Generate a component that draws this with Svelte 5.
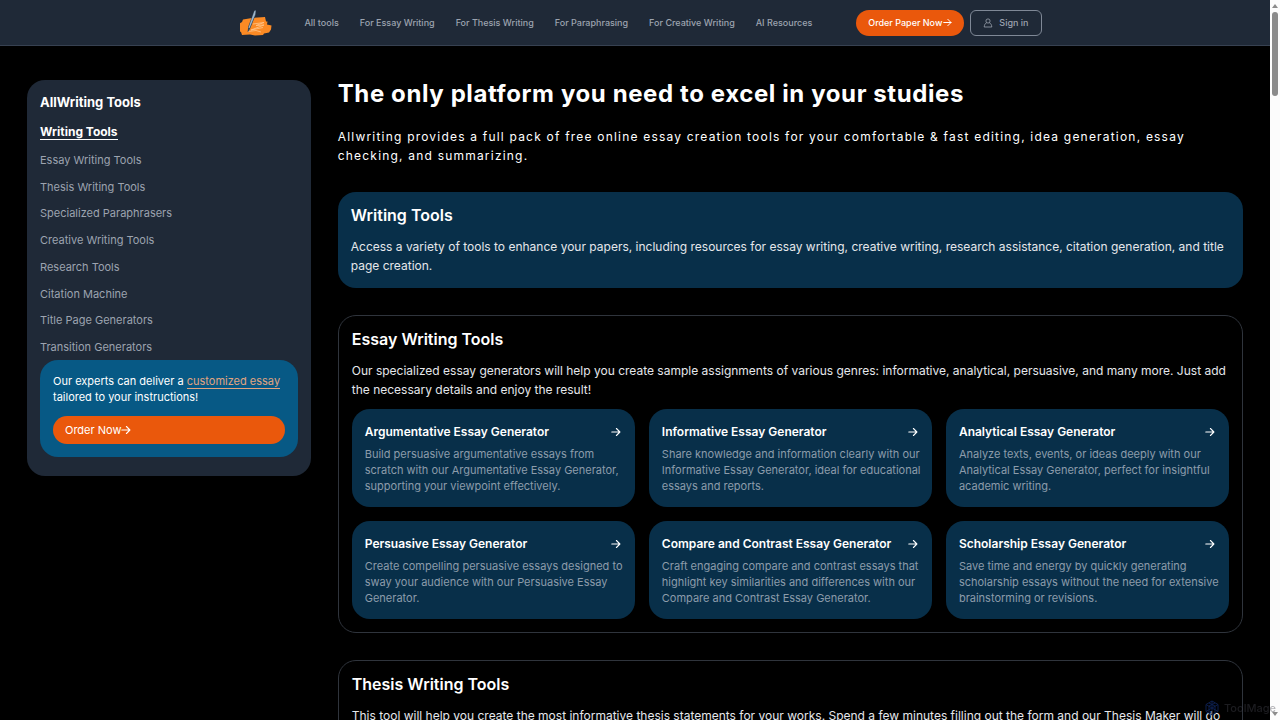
<script lang="ts">
	const navLinks = [
		"All tools",
		"For Essay Writing",
		"For Thesis Writing",
		"For Paraphrasing",
		"For Creative Writing",
		"AI Resources",
	];

	const sidebarLinks = [
		"Essay Writing Tools",
		"Thesis Writing Tools",
		"Specialized Paraphrasers",
		"Creative Writing Tools",
		"Research Tools",
		"Citation Machine",
		"Title Page Generators",
		"Transition Generators",
	];

	const essayTools = [
		{
			title: "Argumentative Essay Generator",
			text: "Build persuasive argumentative essays from scratch with our Argumentative Essay Generator, supporting your viewpoint effectively.",
		},
		{
			title: "Informative Essay Generator",
			text: "Share knowledge and information clearly with our Informative Essay Generator, ideal for educational essays and reports.",
		},
		{
			title: "Analytical Essay Generator",
			text: "Analyze texts, events, or ideas deeply with our Analytical Essay Generator, perfect for insightful academic writing.",
		},
		{
			title: "Persuasive Essay Generator",
			text: "Create compelling persuasive essays designed to sway your audience with our Persuasive Essay Generator.",
		},
		{
			title: "Compare and Contrast Essay Generator",
			text: "Craft engaging compare and contrast essays that highlight key similarities and differences with our Compare and Contrast Essay Generator.",
		},
		{
			title: "Scholarship Essay Generator",
			text: "Save time and energy by quickly generating scholarship essays without the need for extensive brainstorming or revisions.",
		},
	];
</script>

{#snippet arrow()}
	<svg class="arrow" viewBox="0 0 10 10" aria-hidden="true">
		<path d="M0.8 5h8M5.4 1.5 8.9 5 5.4 8.5" />
	</svg>
{/snippet}

<div class="page">
	<header class="header">
		<div class="header-inner">
			<a class="logo" href="/" aria-label="AllWriting">
				<svg viewBox="0 0 32 28" aria-hidden="true">
					<path
						fill="#fb8a24"
						d="M2 13 3 10.500 12 9l13-1 1 4.500h1.500l-.5 3 4.500 1-.5 4-2 3-5 1-1 1.500-8 .5-5-1-8 .5-1-3-3.500-2 2.500-3-1-3z"
					/>
					<path
						fill="none"
						stroke="#ffc58c"
						stroke-width=".8"
						d="M13 15l11-1.500-8 3 8-.5-13 5 12-2.500M8 22.500l8-1 5 1.500"
					/>
					<path fill="#33475c" d="M14 2 16 1.300l-.5 5L10 20l-2 3-.4-.3.600-5z" />
					<path fill="#9eb4c7" d="M14.500 1.800 15.700 1.500 15.200 5.500 9.600 19l-1.100-.3z" />
				</svg>
			</a>
			<nav class="nav">
				{#each navLinks as link}
					<a href="/">{link}</a>
				{/each}
			</nav>
			<div class="actions">
				<a class="order" href="/order">Order Paper Now{@render arrow()}</a>
				<button class="sign-in" type="button">
					<svg viewBox="0 0 10 10" aria-hidden="true">
						<circle cx="5" cy="3" r="2.1" />
						<path d="M3.700 4.700C2.200 5.300 1.400 6.800 1.200 9h7.600C8.600 6.800 7.800 5.300 6.300 4.700" />
					</svg>
					Sign in
				</button>
			</div>
		</div>
	</header>

	<div class="layout">
		<aside class="sidebar">
			<h3>AllWriting Tools</h3>
			<a class="current" href="#writing">Writing Tools</a>
			<ul>
				{#each sidebarLinks as link}
					<li><a href="#tools">{link}</a></li>
				{/each}
			</ul>
			<div class="promo">
				<p>
					Our experts can deliver a <a href="/order">customized essay</a> tailored to your
					instructions!
				</p>
				<a class="order" href="/order">Order Now{@render arrow()}</a>
			</div>
		</aside>

		<main>
			<h1>The only platform you need to excel in your studies</h1>
			<p class="lead">
				Allwriting provides a full pack of free online essay creation tools for your comfortable
				&amp; fast editing, idea generation, essay checking, and summarizing.
			</p>

			<section class="panel filled" id="writing">
				<h2>Writing Tools</h2>
				<p>
					Access a variety of tools to enhance your papers, including resources for essay writing,
					creative writing, research assistance, citation generation, and title page creation.
				</p>
			</section>

			<section class="panel" id="tools">
				<h2>Essay Writing Tools</h2>
				<p>
					Our specialized essay generators will help you create sample assignments of various
					genres: informative, analytical, persuasive, and many more. Just add the necessary details
					and enjoy the result!
				</p>
				<div class="cards">
					{#each essayTools as tool}
						<a class="card" href="/">
							<h4>{tool.title}{@render arrow()}</h4>
							<p>{tool.text}</p>
						</a>
					{/each}
				</div>
			</section>

			<section class="panel">
				<h2>Thesis Writing Tools</h2>
				<p>
					This tool will help you create the most informative thesis statements for your works.
					Spend a few minutes filling out the form and our Thesis Maker will do
				</p>
			</section>
		</main>
	</div>
</div>

<div class="scrollbar" aria-hidden="true">
	<span class="up"></span>
	<span class="thumb"></span>
	<span class="down"></span>
</div>

<div class="watermark">
	<svg viewBox="0 0 16 16" aria-hidden="true">
		<path
			d="M8 1 14 4.500v7L8 15 2 11.500v-7zM8 1v7l6 3.500M2 4.500l6 3.500-6 3.500M14 4.500 8 8v7M5 3l6 3v7M11 3 5 6v7"
		/>
	</svg>
	ToolMage
</div>

<style>
	:global(html) {
		scrollbar-width: none;
	}

	:global(body) {
		background: #000;
	}

	.page {
		padding-right: 10px;
		background: #000;
		color: #fff;
		font-family: Inter, "Liberation Sans", sans-serif;
		font-size: 11px;
		line-height: 16px;
	}

	h1,
	h2,
	h3,
	h4,
	p,
	ul {
		margin: 0;
		padding: 0;
	}

	a {
		color: inherit;
		text-decoration: none;
	}

	.arrow {
		width: 10px;
		height: 10px;
		flex: none;
		fill: none;
		stroke: currentColor;
		stroke-width: 1.1;
		stroke-linecap: round;
		stroke-linejoin: round;
	}

	.header {
		background: #1f2937;
		border-bottom: 1px solid #374151;
	}

	.header-inner {
		display: flex;
		align-items: center;
		justify-content: center;
		height: 45px;
		padding-left: 12px;
		color: #9ca3af;
		font-size: 9px;
		font-weight: 500;
	}

	.logo svg {
		display: block;
		width: 32px;
		height: 28px;
	}

	.nav {
		display: flex;
		gap: 21px;
		margin: 0 44px 0 32px;
	}

	.actions {
		display: flex;
		gap: 6px;
	}

	.order {
		display: flex;
		align-items: center;
		box-sizing: border-box;
		padding: 0 12px;
		border-radius: 14px;
		background: #ea580c;
		color: #fff;
	}

	.actions .order {
		gap: 1px;
		height: 26px;
	}

	.actions .arrow {
		width: 9px;
		height: 9px;
	}

	.sign-in {
		display: flex;
		align-items: center;
		gap: 6px;
		height: 26px;
		padding: 0 12px;
		border: 1px solid #7f8896;
		border-radius: 6px;
		background: none;
		color: inherit;
		font: inherit;
	}

	.sign-in svg {
		width: 10px;
		height: 10px;
		fill: none;
		stroke: currentColor;
		stroke-width: 0.8;
	}

	.layout {
		display: grid;
		grid-template-columns: repeat(4, minmax(0, 1fr));
		gap: 27px;
		align-items: start;
		padding: 34px 27px;
	}

	.sidebar {
		padding: 13px 13px 19px;
		border-radius: 18px;
		background: #1f2937;
	}

	.sidebar h3 {
		font-size: 13px;
		line-height: 19px;
		font-weight: 700;
	}

	.sidebar .current {
		display: inline-block;
		margin-top: 12px;
		border-bottom: 1px solid #fff;
		font-size: 12px;
		font-weight: 700;
		line-height: 15px;
	}

	ul {
		display: flex;
		flex-direction: column;
		justify-content: space-between;
		height: 203px;
		margin-top: 12px;
		list-style: none;
		color: #9ca3af;
	}

	.promo {
		margin-top: 5px;
		padding: 13px;
		border-radius: 18px;
		background: #075985;
	}

	.promo p a {
		border-bottom: 1px solid #e0a480;
		color: #e0a480;
	}

	.promo .order {
		height: 28px;
		margin-top: 11px;
	}

	main {
		grid-column: span 3;
	}

	h1 {
		font-size: 24px;
		line-height: 27px;
		font-weight: 700;
		letter-spacing: 0.025em;
	}

	.lead {
		margin: 20px 0 27px;
		font-size: 12px;
		line-height: 19px;
		letter-spacing: 0.1em;
	}

	.panel {
		padding: 13px;
		margin-bottom: 27px;
		border: 1px solid #2f343c;
		border-radius: 18px;
		font-size: 12px;
		line-height: 19px;
	}

	.panel.filled {
		border: none;
		background: #082f49;
	}

	h2 {
		margin-bottom: 11px;
		font-size: 16px;
		line-height: 21px;
		font-weight: 600;
	}

	.panel > p {
		color: #e5e7eb;
	}

	.cards {
		display: grid;
		grid-template-columns: repeat(3, minmax(0, 1fr));
		gap: 14px;
		margin-top: 10px;
	}

	.card {
		padding: 13px 8px 13px 13px;
		border-radius: 18px;
		background: #082f49;
	}

	h4 {
		display: flex;
		align-items: center;
		justify-content: space-between;
		padding-right: 6px;
		font-size: 12px;
		line-height: 19px;
		font-weight: 600;
	}

	.card p {
		margin-top: 5px;
		color: #8c9cab;
		font-size: 11px;
		line-height: 16px;
	}

	.watermark {
		position: fixed;
		right: 4px;
		bottom: 4px;
		display: flex;
		align-items: center;
		gap: 4px;
		color: rgb(70 70 80 / 40%);
		font: 500 11px/16px Inter, sans-serif;
	}

	.watermark svg {
		width: 16px;
		height: 16px;
		fill: none;
		stroke: #0d1f4d;
	}

	.scrollbar {
		position: fixed;
		inset: 0 0 0 auto;
		display: flex;
		flex-direction: column;
		align-items: center;
		box-sizing: border-box;
		width: 10px;
		padding: 4px 0;
		background: #fcfcfc;
	}

	.up,
	.down {
		border: 3px solid transparent;
		border-top-width: 0;
		border-bottom: 4px solid #8b8b8b;
	}

	.down {
		margin-top: auto;
		transform: rotate(180deg);
	}

	.thumb {
		width: 6px;
		height: 84px;
		margin-top: 4px;
		border-radius: 3px;
		background: #8b8b8b;
	}
</style>
